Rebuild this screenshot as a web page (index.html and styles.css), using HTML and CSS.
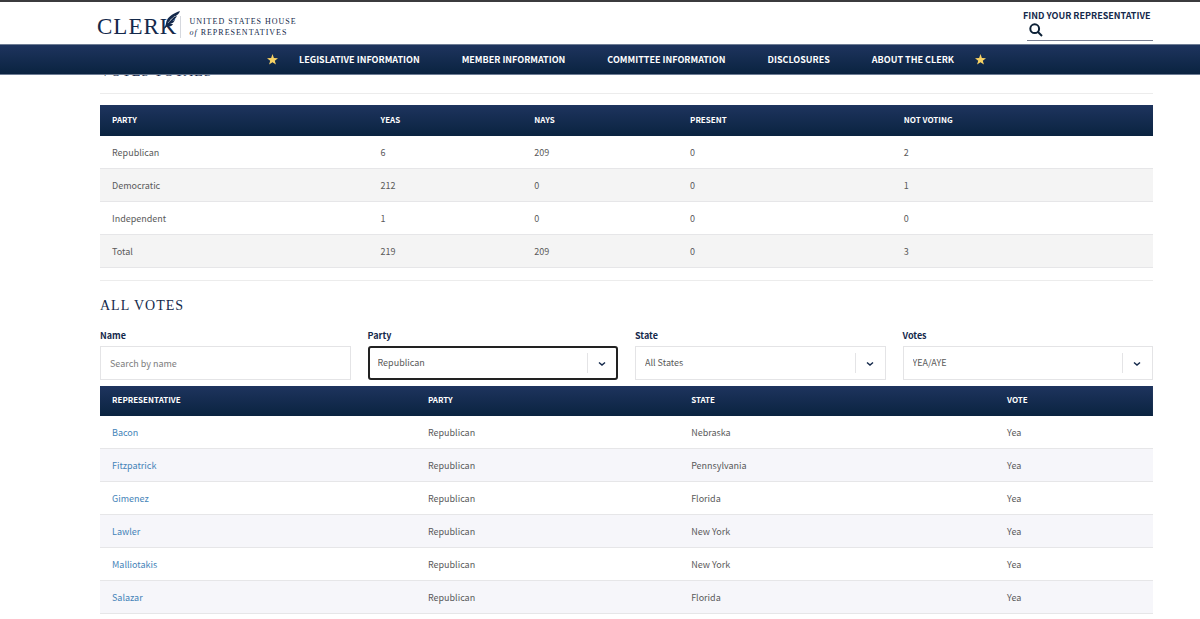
FILE: index.html
```
<!DOCTYPE html>
<html lang="en">
<head>
	<meta charset="UTF-8">
	<meta name="viewport" content="width=device-width, initial-scale=1.0">
	<title>Clerk - Votes</title>
	<link rel="stylesheet" href="styles.css">
</head>
<body>
	<header class="site-header">
		<div class="topbar">
			<a class="logo" href="#">
				<span class="logo-name">CLERK</span>
				<svg class="feather" viewBox="0 0 18 22" aria-hidden="true">
					<path d="M18 0C12 2 7 5 5 9C4 11 4 13 3 16L1 20L5 15C8 16 10 15 11 13L8 13C11 12 12 11 13 9L10 10C13 8 14 7 15 5L12 6C15 4 17 3 18 0Z"/>
					<path class="vein" d="M6 12L10 7.500M8 9.500L13 5"/>
				</svg>
				<span class="logo-sub">UNITED STATES HOUSE<br><em>of</em> REPRESENTATIVES</span>
			</a>
			<form class="find">
				<label for="find">FIND YOUR REPRESENTATIVE</label>
				<div class="find-box">
					<svg viewBox="0 0 14 14" aria-hidden="true"><circle cx="5.7" cy="5.7" r="4.4"/><path d="M9 9L13 13"/></svg>
					<input id="find" type="text">
				</div>
			</form>
		</div>
		<nav class="main-nav">
			<svg class="star" viewBox="0 0 24 24" aria-hidden="true"><path d="M12 0L15 8.5L24 9L17 14.5L19.5 23L12 18L4.5 23L7 14.5L0 9L9 8.5Z"/></svg>
			<ul>
				<li><a href="#">LEGISLATIVE INFORMATION</a></li>
				<li><a href="#">MEMBER INFORMATION</a></li>
				<li><a href="#">COMMITTEE INFORMATION</a></li>
				<li><a href="#">DISCLOSURES</a></li>
				<li><a href="#">ABOUT THE CLERK</a></li>
			</ul>
			<svg class="star" viewBox="0 0 24 24" aria-hidden="true"><path d="M12 0L15 8.5L24 9L17 14.5L19.5 23L12 18L4.5 23L7 14.5L0 9L9 8.5Z"/></svg>
		</nav>
	</header>

	<main>
		<section class="totals">
			<h2>VOTES TOTALS</h2>
			<table class="totals-table">
				<thead>
					<tr><th>PARTY</th><th>YEAS</th><th>NAYS</th><th>PRESENT</th><th>NOT VOTING</th></tr>
				</thead>
				<tbody>
					<tr><td>Republican</td><td>6</td><td>209</td><td>0</td><td>2</td></tr>
					<tr><td>Democratic</td><td>212</td><td>0</td><td>0</td><td>1</td></tr>
					<tr><td>Independent</td><td>1</td><td>0</td><td>0</td><td>0</td></tr>
					<tr><td>Total</td><td>219</td><td>209</td><td>0</td><td>3</td></tr>
				</tbody>
			</table>
		</section>

		<section class="all-votes">
			<h2>ALL VOTES</h2>
			<form class="filters">
				<div class="field">
					<label for="name">Name</label>
					<input id="name" type="text" placeholder="Search by name">
				</div>
				<div class="field">
					<label for="party">Party</label>
					<div class="select active">
						<select id="party"><option>Republican</option><option>Democratic</option><option>Independent</option></select>
						<svg viewBox="0 0 8 6" aria-hidden="true"><path d="M1 1.5L4 4L7 1.5"/></svg>
					</div>
				</div>
				<div class="field">
					<label for="state">State</label>
					<div class="select">
						<select id="state"><option>All States</option><option>Florida</option><option>Nebraska</option><option>New York</option><option>Pennsylvania</option></select>
						<svg viewBox="0 0 8 6" aria-hidden="true"><path d="M1 1.5L4 4L7 1.5"/></svg>
					</div>
				</div>
				<div class="field">
					<label for="votes">Votes</label>
					<div class="select">
						<select id="votes"><option>YEA/AYE</option><option>NAY/NO</option></select>
						<svg viewBox="0 0 8 6" aria-hidden="true"><path d="M1 1.5L4 4L7 1.5"/></svg>
					</div>
				</div>
			</form>
			<table class="votes-table">
				<thead>
					<tr><th>REPRESENTATIVE</th><th>PARTY</th><th>STATE</th><th>VOTE</th></tr>
				</thead>
				<tbody>
					<tr><td><a href="#">Bacon</a></td><td>Republican</td><td>Nebraska</td><td>Yea</td></tr>
					<tr><td><a href="#">Fitzpatrick</a></td><td>Republican</td><td>Pennsylvania</td><td>Yea</td></tr>
					<tr><td><a href="#">Gimenez</a></td><td>Republican</td><td>Florida</td><td>Yea</td></tr>
					<tr><td><a href="#">Lawler</a></td><td>Republican</td><td>New York</td><td>Yea</td></tr>
					<tr><td><a href="#">Malliotakis</a></td><td>Republican</td><td>New York</td><td>Yea</td></tr>
					<tr><td><a href="#">Salazar</a></td><td>Republican</td><td>Florida</td><td>Yea</td></tr>
				</tbody>
			</table>
		</section>
	</main>
</body>
</html>
```
FILE: styles.css
```
* { box-sizing: border-box }

body {
	margin: 0;
	background: #fff;
	color: #5a5a5a;
	font-family: "Noto Sans CJK SC", "Open Sans", sans-serif;
	font-size: 9px;
	line-height: 12px;
}

a { text-decoration: none }

input, select {
	font: inherit;
	color: inherit;
}

.site-header {
	position: sticky;
	top: 0;
	z-index: 2;
	border-top: 2px solid #3b3b3d;
	background: #fff;
}

.topbar {
	display: flex;
	justify-content: space-between;
	height: 42px;
	padding: 0 47px 0 97px;
}

.logo {
	display: flex;
	align-items: flex-start;
	padding-top: 9px;
	color: #14294b;
	font-family: "Liberation Serif", serif;
}

.logo-name {
	padding-top: 4px;
	font-size: 23px;
	line-height: 24px;
	letter-spacing: 1px;
}

.feather {
	width: 18px;
	height: 22px;
	margin-left: -15px;
	fill: #14294b;
}
.feather .vein {
	fill: none;
	stroke: #fff;
	stroke-width: 0.5;
}

.logo-sub {
	margin-top: 5px;
	padding-left: 8px;
	border-left: 1px solid #d5d8de;
	font-size: 8px;
	line-height: 11px;
	letter-spacing: 1px;
}

.find {
	width: 130px;
	padding-top: 8px;
	color: #14294b;
}
.find label {
	font-weight: 700;
	white-space: nowrap;
}

.find-box {
	display: flex;
	margin-left: 4px;
	padding: 1px 2px 3px;
	border-bottom: 1px solid #777d90;
}
.find-box svg {
	flex: none;
	width: 14px;
	height: 14px;
	fill: none;
	stroke: #0b2036;
	stroke-width: 2;
}
.find-box input {
	width: 100%;
	height: 14px;
	border: none;
	outline: none;
	background: none;
}

.main-nav {
	display: flex;
	justify-content: center;
	align-items: center;
	gap: 21px;
	height: 31px;
	padding: 0 47px 0 100px;
	border-top: 1px solid #6d7c94;
	border-bottom: 1px solid #6d7c94;
	background: linear-gradient(#1e345e, #0a2340);
}
.main-nav ul {
	display: flex;
	gap: 42px;
	margin: 0;
	padding: 0;
	list-style: none;
}
.main-nav a {
	color: #fff;
	font-weight: 700;
}

.star {
	width: 11px;
	height: 11px;
	fill: #f8d364;
}

main { padding: 0 47px 0 100px }

h2 {
	margin: 0;
	color: #14294b;
	font-family: "Liberation Serif", serif;
	font-size: 14px;
	font-weight: 400;
	line-height: 20px;
	letter-spacing: 1px;
}

/* the heading is scrolled behind the sticky header */
.totals { margin-top: -13px }
.totals h2 {
	margin-bottom: 11px;
	padding-bottom: 11px;
	border-bottom: 1px solid #ececec;
}

.all-votes {
	margin-top: 12px;
	padding-top: 15px;
	border-top: 1px solid #ececec;
}

table {
	width: 100%;
	table-layout: fixed;
	border-collapse: separate;
	border-spacing: 0;
}

thead tr { background: linear-gradient(#1e345e, #0a2340) }

th, td {
	padding: 0 12px;
	text-align: left;
}
th {
	height: 30px;
	padding-bottom: 2px;
	color: #fff;
	font-size: 8px;
	font-weight: 700;
}
td {
	height: 33px;
	padding-top: 1px;
	border-bottom: 1px solid #e6e6e8;
}

.totals-table th { height: 31px }
.totals-table tbody tr:nth-child(even) { background: #f4f4f4 }
.totals-table th:nth-child(1) { width: 25.5% }
.totals-table th:nth-child(2) { width: 14.6% }
.totals-table th:nth-child(3) { width: 14.8% }
.totals-table th:nth-child(4) { width: 20.3% }

.votes-table tbody tr:nth-child(even) { background: #f6f6fa }
.votes-table th:nth-child(1) { width: 30% }
.votes-table th:nth-child(2) { width: 25% }
.votes-table th:nth-child(3) { width: 30% }
.votes-table a { color: #4583b8 }

.filters {
	display: grid;
	grid-template-columns: repeat(4, 1fr);
	gap: 17px;
	margin: 14px 0 6px;
}

.field label {
	display: block;
	margin-bottom: 4px;
	color: #14294b;
	font-weight: 700;
}
.field input, .field select {
	display: block;
	width: 100%;
	height: 34px;
	padding: 0 9px;
	border: 1px solid #e4e4e6;
	border-radius: 0;
	background: #fff;
	appearance: none;
}
.field input::placeholder { color: #7d7d7d }

.select { position: relative }
.select::after {
	content: "";
	position: absolute;
	top: 7px;
	right: 30px;
	height: 20px;
	border-left: 1px solid #e4e4e6;
}
.select svg {
	position: absolute;
	top: 15px;
	right: 12px;
	width: 8px;
	height: 6px;
	fill: none;
	stroke: #14294b;
	stroke-width: 1.5;
	pointer-events: none;
}
.select.active select {
	padding: 0 8px;
	border: 2px solid #222;
	border-radius: 3px;
}
```
